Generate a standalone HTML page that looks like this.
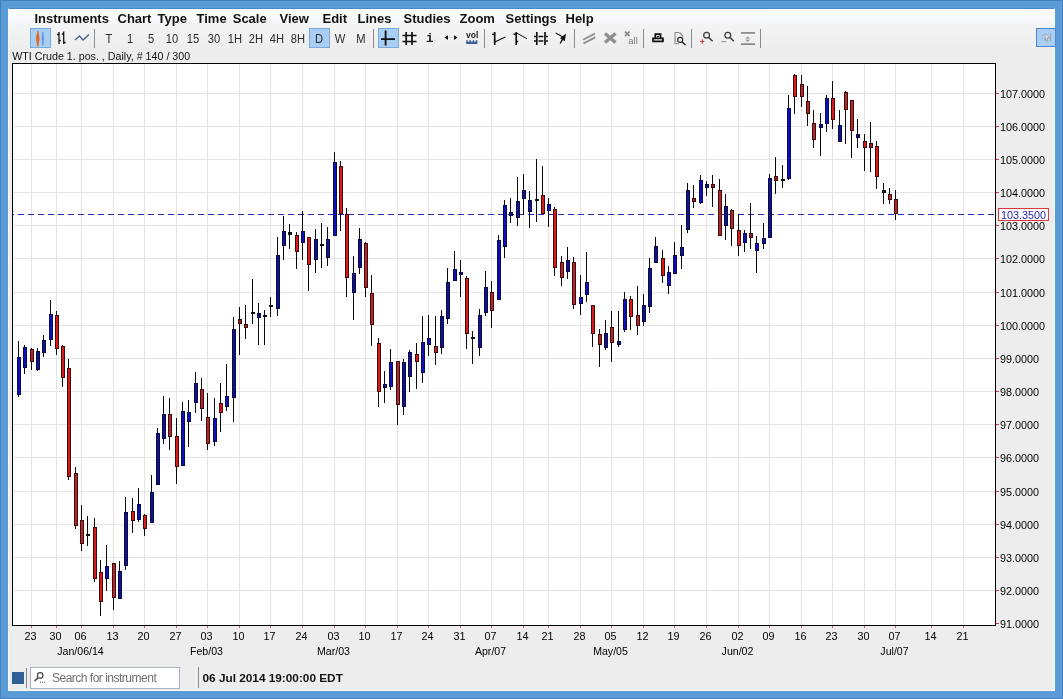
<!DOCTYPE html>
<html><head><meta charset="utf-8">
<style>
html,body{margin:0;padding:0}
body{will-change:transform;width:1063px;height:699px;overflow:hidden;position:relative;background:#5b9bd5;font-family:"Liberation Sans",sans-serif;}
#win{position:absolute;left:8px;top:8px;width:1047px;height:683px;background:#ededed;box-sizing:border-box;border:1px solid #f6fafd;border-top:1px solid #4c88c8}
#topgrad{position:absolute;left:0;top:0;width:1045px;height:18px;background:linear-gradient(#fefefe,#f2f3f5);}
#tbgrad{position:absolute;left:0;top:18px;width:1045px;height:24px;background:linear-gradient(#f3f3f3,#ededed);}
.menu{position:absolute;margin-left:0.5px;top:10.6px;font-size:13px;font-weight:bold;color:#111;line-height:15px;white-space:nowrap;word-spacing:2.5px}
.tb{position:absolute;top:30.5px;font-size:13px;color:#2c2c2c;line-height:15px;white-space:nowrap;text-align:center;width:30px;transform:scaleX(0.86);transform-origin:50% 50%}
.sep{position:absolute;top:29px;width:1px;height:19px;background:#8c8c8c}
.sel{position:absolute;top:28px;height:20px;background:#a8cef4;border:1px solid #78a8dc;box-sizing:border-box}
#title{position:absolute;left:12.2px;top:49.5px;font-size:10.7px;color:#111;line-height:13px;white-space:nowrap}
.yl{position:absolute;left:1000px;margin-top:1.6px;font-size:10.8px;line-height:13px;color:#000;white-space:nowrap}
.xl{position:absolute;top:630px;width:41px;text-align:center;font-size:10.8px;line-height:13px;color:#000}
.ml{position:absolute;top:645px;width:81px;text-align:center;font-size:10.6px;line-height:13px;color:#000}
#pricebox{position:absolute;left:998px;top:208px;width:51px;height:13px;box-sizing:border-box;border:1px solid #d63a3a;background:#fff;color:#2323b4;font-size:10.8px;line-height:12.6px;text-align:center}
</style></head><body>
<div style="position:absolute;left:0;top:0;width:1063px;height:699px;box-sizing:border-box;border:1px solid #4380c2"></div>
<div id="win"><div id="topgrad"></div><div id="tbgrad"></div></div>
<svg width="1063" height="699" viewBox="0 0 1063 699" shape-rendering="crispEdges" style="position:absolute;left:0;top:0">
<rect x="12" y="63" width="984" height="563" fill="#ffffff"/>
<rect x="13" y="590" width="982" height="1" fill="#e4e3e5"/>
<rect x="13" y="557" width="982" height="1" fill="#e4e3e5"/>
<rect x="13" y="524" width="982" height="1" fill="#e4e3e5"/>
<rect x="13" y="491" width="982" height="1" fill="#e4e3e5"/>
<rect x="13" y="457" width="982" height="1" fill="#e4e3e5"/>
<rect x="13" y="424" width="982" height="1" fill="#e4e3e5"/>
<rect x="13" y="391" width="982" height="1" fill="#e4e3e5"/>
<rect x="13" y="358" width="982" height="1" fill="#e4e3e5"/>
<rect x="13" y="325" width="982" height="1" fill="#e4e3e5"/>
<rect x="13" y="292" width="982" height="1" fill="#e4e3e5"/>
<rect x="13" y="258" width="982" height="1" fill="#e4e3e5"/>
<rect x="13" y="225" width="982" height="1" fill="#e4e3e5"/>
<rect x="13" y="192" width="982" height="1" fill="#e4e3e5"/>
<rect x="13" y="159" width="982" height="1" fill="#e4e3e5"/>
<rect x="13" y="126" width="982" height="1" fill="#e4e3e5"/>
<rect x="13" y="93" width="982" height="1" fill="#e4e3e5"/>
<rect x="31" y="64" width="1" height="561" fill="#e4e3e5"/>
<rect x="56" y="64" width="1" height="561" fill="#e4e3e5"/>
<rect x="81" y="64" width="1" height="561" fill="#e4e3e5"/>
<rect x="113" y="64" width="1" height="561" fill="#e4e3e5"/>
<rect x="144" y="64" width="1" height="561" fill="#e4e3e5"/>
<rect x="176" y="64" width="1" height="561" fill="#e4e3e5"/>
<rect x="207" y="64" width="1" height="561" fill="#e4e3e5"/>
<rect x="239" y="64" width="1" height="561" fill="#e4e3e5"/>
<rect x="270" y="64" width="1" height="561" fill="#e4e3e5"/>
<rect x="302" y="64" width="1" height="561" fill="#e4e3e5"/>
<rect x="334" y="64" width="1" height="561" fill="#e4e3e5"/>
<rect x="365" y="64" width="1" height="561" fill="#e4e3e5"/>
<rect x="397" y="64" width="1" height="561" fill="#e4e3e5"/>
<rect x="428" y="64" width="1" height="561" fill="#e4e3e5"/>
<rect x="460" y="64" width="1" height="561" fill="#e4e3e5"/>
<rect x="491" y="64" width="1" height="561" fill="#e4e3e5"/>
<rect x="523" y="64" width="1" height="561" fill="#e4e3e5"/>
<rect x="548" y="64" width="1" height="561" fill="#e4e3e5"/>
<rect x="580" y="64" width="1" height="561" fill="#e4e3e5"/>
<rect x="611" y="64" width="1" height="561" fill="#e4e3e5"/>
<rect x="643" y="64" width="1" height="561" fill="#e4e3e5"/>
<rect x="674" y="64" width="1" height="561" fill="#e4e3e5"/>
<rect x="706" y="64" width="1" height="561" fill="#e4e3e5"/>
<rect x="738" y="64" width="1" height="561" fill="#e4e3e5"/>
<rect x="769" y="64" width="1" height="561" fill="#e4e3e5"/>
<rect x="801" y="64" width="1" height="561" fill="#e4e3e5"/>
<rect x="832" y="64" width="1" height="561" fill="#e4e3e5"/>
<rect x="864" y="64" width="1" height="561" fill="#e4e3e5"/>
<rect x="895" y="64" width="1" height="561" fill="#e4e3e5"/>
<rect x="931" y="64" width="1" height="561" fill="#e4e3e5"/>
<rect x="963" y="64" width="1" height="561" fill="#e4e3e5"/>
<rect x="13" y="214" width="1" height="1" fill="#2a2ab8"/>
<rect x="18" y="214" width="6" height="1" fill="#2a2ab8"/>
<rect x="28" y="214" width="6" height="1" fill="#2a2ab8"/>
<rect x="38" y="214" width="6" height="1" fill="#2a2ab8"/>
<rect x="48" y="214" width="6" height="1" fill="#2a2ab8"/>
<rect x="58" y="214" width="6" height="1" fill="#2a2ab8"/>
<rect x="68" y="214" width="6" height="1" fill="#2a2ab8"/>
<rect x="78" y="214" width="6" height="1" fill="#2a2ab8"/>
<rect x="88" y="214" width="6" height="1" fill="#2a2ab8"/>
<rect x="98" y="214" width="6" height="1" fill="#2a2ab8"/>
<rect x="108" y="214" width="6" height="1" fill="#2a2ab8"/>
<rect x="118" y="214" width="6" height="1" fill="#2a2ab8"/>
<rect x="128" y="214" width="6" height="1" fill="#2a2ab8"/>
<rect x="138" y="214" width="6" height="1" fill="#2a2ab8"/>
<rect x="148" y="214" width="6" height="1" fill="#2a2ab8"/>
<rect x="158" y="214" width="6" height="1" fill="#2a2ab8"/>
<rect x="168" y="214" width="6" height="1" fill="#2a2ab8"/>
<rect x="178" y="214" width="6" height="1" fill="#2a2ab8"/>
<rect x="188" y="214" width="6" height="1" fill="#2a2ab8"/>
<rect x="198" y="214" width="6" height="1" fill="#2a2ab8"/>
<rect x="208" y="214" width="6" height="1" fill="#2a2ab8"/>
<rect x="218" y="214" width="6" height="1" fill="#2a2ab8"/>
<rect x="228" y="214" width="6" height="1" fill="#2a2ab8"/>
<rect x="238" y="214" width="6" height="1" fill="#2a2ab8"/>
<rect x="248" y="214" width="6" height="1" fill="#2a2ab8"/>
<rect x="258" y="214" width="6" height="1" fill="#2a2ab8"/>
<rect x="268" y="214" width="6" height="1" fill="#2a2ab8"/>
<rect x="278" y="214" width="6" height="1" fill="#2a2ab8"/>
<rect x="288" y="214" width="6" height="1" fill="#2a2ab8"/>
<rect x="298" y="214" width="6" height="1" fill="#2a2ab8"/>
<rect x="308" y="214" width="6" height="1" fill="#2a2ab8"/>
<rect x="318" y="214" width="6" height="1" fill="#2a2ab8"/>
<rect x="328" y="214" width="6" height="1" fill="#2a2ab8"/>
<rect x="338" y="214" width="6" height="1" fill="#2a2ab8"/>
<rect x="348" y="214" width="6" height="1" fill="#2a2ab8"/>
<rect x="358" y="214" width="6" height="1" fill="#2a2ab8"/>
<rect x="368" y="214" width="6" height="1" fill="#2a2ab8"/>
<rect x="378" y="214" width="6" height="1" fill="#2a2ab8"/>
<rect x="388" y="214" width="6" height="1" fill="#2a2ab8"/>
<rect x="398" y="214" width="6" height="1" fill="#2a2ab8"/>
<rect x="408" y="214" width="6" height="1" fill="#2a2ab8"/>
<rect x="418" y="214" width="6" height="1" fill="#2a2ab8"/>
<rect x="428" y="214" width="6" height="1" fill="#2a2ab8"/>
<rect x="438" y="214" width="6" height="1" fill="#2a2ab8"/>
<rect x="448" y="214" width="6" height="1" fill="#2a2ab8"/>
<rect x="458" y="214" width="6" height="1" fill="#2a2ab8"/>
<rect x="468" y="214" width="6" height="1" fill="#2a2ab8"/>
<rect x="478" y="214" width="6" height="1" fill="#2a2ab8"/>
<rect x="488" y="214" width="6" height="1" fill="#2a2ab8"/>
<rect x="498" y="214" width="6" height="1" fill="#2a2ab8"/>
<rect x="508" y="214" width="6" height="1" fill="#2a2ab8"/>
<rect x="518" y="214" width="6" height="1" fill="#2a2ab8"/>
<rect x="528" y="214" width="6" height="1" fill="#2a2ab8"/>
<rect x="538" y="214" width="6" height="1" fill="#2a2ab8"/>
<rect x="548" y="214" width="6" height="1" fill="#2a2ab8"/>
<rect x="558" y="214" width="6" height="1" fill="#2a2ab8"/>
<rect x="568" y="214" width="6" height="1" fill="#2a2ab8"/>
<rect x="578" y="214" width="6" height="1" fill="#2a2ab8"/>
<rect x="588" y="214" width="6" height="1" fill="#2a2ab8"/>
<rect x="598" y="214" width="6" height="1" fill="#2a2ab8"/>
<rect x="608" y="214" width="6" height="1" fill="#2a2ab8"/>
<rect x="618" y="214" width="6" height="1" fill="#2a2ab8"/>
<rect x="628" y="214" width="6" height="1" fill="#2a2ab8"/>
<rect x="638" y="214" width="6" height="1" fill="#2a2ab8"/>
<rect x="648" y="214" width="6" height="1" fill="#2a2ab8"/>
<rect x="658" y="214" width="6" height="1" fill="#2a2ab8"/>
<rect x="668" y="214" width="6" height="1" fill="#2a2ab8"/>
<rect x="678" y="214" width="6" height="1" fill="#2a2ab8"/>
<rect x="688" y="214" width="6" height="1" fill="#2a2ab8"/>
<rect x="698" y="214" width="6" height="1" fill="#2a2ab8"/>
<rect x="708" y="214" width="6" height="1" fill="#2a2ab8"/>
<rect x="718" y="214" width="6" height="1" fill="#2a2ab8"/>
<rect x="728" y="214" width="6" height="1" fill="#2a2ab8"/>
<rect x="738" y="214" width="6" height="1" fill="#2a2ab8"/>
<rect x="748" y="214" width="6" height="1" fill="#2a2ab8"/>
<rect x="758" y="214" width="6" height="1" fill="#2a2ab8"/>
<rect x="768" y="214" width="6" height="1" fill="#2a2ab8"/>
<rect x="778" y="214" width="6" height="1" fill="#2a2ab8"/>
<rect x="788" y="214" width="6" height="1" fill="#2a2ab8"/>
<rect x="798" y="214" width="6" height="1" fill="#2a2ab8"/>
<rect x="808" y="214" width="6" height="1" fill="#2a2ab8"/>
<rect x="818" y="214" width="6" height="1" fill="#2a2ab8"/>
<rect x="828" y="214" width="6" height="1" fill="#2a2ab8"/>
<rect x="838" y="214" width="6" height="1" fill="#2a2ab8"/>
<rect x="848" y="214" width="6" height="1" fill="#2a2ab8"/>
<rect x="858" y="214" width="6" height="1" fill="#2a2ab8"/>
<rect x="868" y="214" width="6" height="1" fill="#2a2ab8"/>
<rect x="878" y="214" width="6" height="1" fill="#2a2ab8"/>
<rect x="888" y="214" width="6" height="1" fill="#2a2ab8"/>
<rect x="898" y="214" width="6" height="1" fill="#2a2ab8"/>
<rect x="908" y="214" width="6" height="1" fill="#2a2ab8"/>
<rect x="918" y="214" width="6" height="1" fill="#2a2ab8"/>
<rect x="928" y="214" width="6" height="1" fill="#2a2ab8"/>
<rect x="938" y="214" width="6" height="1" fill="#2a2ab8"/>
<rect x="948" y="214" width="6" height="1" fill="#2a2ab8"/>
<rect x="958" y="214" width="6" height="1" fill="#2a2ab8"/>
<rect x="968" y="214" width="6" height="1" fill="#2a2ab8"/>
<rect x="978" y="214" width="6" height="1" fill="#2a2ab8"/>
<rect x="988" y="214" width="6" height="1" fill="#2a2ab8"/>
<rect x="18" y="341" width="1" height="56" fill="#0a0a0a"/>
<rect x="17" y="357" width="4" height="38" fill="#0a0a44"/>
<rect x="18" y="358" width="2" height="36" fill="#1010ba"/>
<rect x="24" y="345" width="1" height="29" fill="#0a0a0a"/>
<rect x="23" y="347" width="4" height="21" fill="#0a0a44"/>
<rect x="24" y="348" width="2" height="19" fill="#1010ba"/>
<rect x="31" y="348" width="1" height="22" fill="#0a0a0a"/>
<rect x="30" y="349" width="4" height="13" fill="#420a0a"/>
<rect x="31" y="350" width="2" height="11" fill="#aa2a2e"/>
<rect x="37" y="348" width="1" height="23" fill="#0a0a0a"/>
<rect x="36" y="351" width="4" height="19" fill="#0a0a44"/>
<rect x="37" y="352" width="2" height="17" fill="#12128e"/>
<rect x="43" y="335" width="1" height="22" fill="#0a0a0a"/>
<rect x="42" y="340" width="4" height="13" fill="#0a0a44"/>
<rect x="43" y="341" width="2" height="11" fill="#12128e"/>
<rect x="50" y="300" width="1" height="46" fill="#0a0a0a"/>
<rect x="49" y="314" width="4" height="26" fill="#0a0a44"/>
<rect x="50" y="315" width="2" height="24" fill="#1010ba"/>
<rect x="56" y="311" width="1" height="44" fill="#0a0a0a"/>
<rect x="55" y="315" width="4" height="34" fill="#420a0a"/>
<rect x="56" y="316" width="2" height="32" fill="#d41c1c"/>
<rect x="62" y="345" width="1" height="42" fill="#0a0a0a"/>
<rect x="61" y="346" width="4" height="32" fill="#420a0a"/>
<rect x="62" y="347" width="2" height="30" fill="#d41c1c"/>
<rect x="68" y="359" width="1" height="121" fill="#0a0a0a"/>
<rect x="67" y="368" width="4" height="109" fill="#420a0a"/>
<rect x="68" y="369" width="2" height="107" fill="#d41c1c"/>
<rect x="75" y="467" width="1" height="62" fill="#0a0a0a"/>
<rect x="74" y="473" width="4" height="53" fill="#420a0a"/>
<rect x="75" y="474" width="2" height="51" fill="#aa2a2e"/>
<rect x="81" y="505" width="1" height="46" fill="#0a0a0a"/>
<rect x="80" y="520" width="4" height="24" fill="#420a0a"/>
<rect x="81" y="521" width="2" height="22" fill="#aa2a2e"/>
<rect x="87" y="516" width="1" height="30" fill="#0a0a0a"/>
<rect x="86" y="534" width="4" height="2" fill="#101010"/>
<rect x="94" y="518" width="1" height="64" fill="#0a0a0a"/>
<rect x="93" y="527" width="4" height="52" fill="#420a0a"/>
<rect x="94" y="528" width="2" height="50" fill="#d41c1c"/>
<rect x="100" y="560" width="1" height="56" fill="#0a0a0a"/>
<rect x="99" y="572" width="4" height="30" fill="#420a0a"/>
<rect x="100" y="573" width="2" height="28" fill="#d41c1c"/>
<rect x="106" y="545" width="1" height="46" fill="#0a0a0a"/>
<rect x="105" y="566" width="4" height="13" fill="#0a0a44"/>
<rect x="106" y="567" width="2" height="11" fill="#1010ba"/>
<rect x="113" y="563" width="1" height="47" fill="#0a0a0a"/>
<rect x="112" y="563" width="4" height="35" fill="#420a0a"/>
<rect x="113" y="564" width="2" height="33" fill="#aa2a2e"/>
<rect x="119" y="561" width="1" height="38" fill="#0a0a0a"/>
<rect x="118" y="571" width="4" height="28" fill="#0a0a44"/>
<rect x="119" y="572" width="2" height="26" fill="#12128e"/>
<rect x="125" y="497" width="1" height="73" fill="#0a0a0a"/>
<rect x="124" y="512" width="4" height="54" fill="#0a0a44"/>
<rect x="125" y="513" width="2" height="52" fill="#12128e"/>
<rect x="132" y="498" width="1" height="35" fill="#0a0a0a"/>
<rect x="131" y="511" width="4" height="10" fill="#420a0a"/>
<rect x="132" y="512" width="2" height="8" fill="#d41c1c"/>
<rect x="138" y="488" width="1" height="34" fill="#0a0a0a"/>
<rect x="137" y="504" width="4" height="16" fill="#0a0a44"/>
<rect x="138" y="505" width="2" height="14" fill="#1010ba"/>
<rect x="144" y="514" width="1" height="22" fill="#0a0a0a"/>
<rect x="143" y="515" width="4" height="14" fill="#420a0a"/>
<rect x="144" y="516" width="2" height="12" fill="#d41c1c"/>
<rect x="151" y="475" width="1" height="48" fill="#0a0a0a"/>
<rect x="150" y="492" width="4" height="31" fill="#0a0a44"/>
<rect x="151" y="493" width="2" height="29" fill="#12128e"/>
<rect x="157" y="428" width="1" height="57" fill="#0a0a0a"/>
<rect x="156" y="433" width="4" height="52" fill="#0a0a44"/>
<rect x="157" y="434" width="2" height="50" fill="#12128e"/>
<rect x="163" y="396" width="1" height="48" fill="#0a0a0a"/>
<rect x="162" y="414" width="4" height="25" fill="#0a0a44"/>
<rect x="163" y="415" width="2" height="23" fill="#12128e"/>
<rect x="169" y="398" width="1" height="52" fill="#0a0a0a"/>
<rect x="168" y="414" width="4" height="23" fill="#420a0a"/>
<rect x="169" y="415" width="2" height="21" fill="#aa2a2e"/>
<rect x="176" y="418" width="1" height="66" fill="#0a0a0a"/>
<rect x="175" y="436" width="4" height="31" fill="#420a0a"/>
<rect x="176" y="437" width="2" height="29" fill="#d41c1c"/>
<rect x="182" y="402" width="1" height="64" fill="#0a0a0a"/>
<rect x="181" y="411" width="4" height="55" fill="#0a0a44"/>
<rect x="182" y="412" width="2" height="53" fill="#1010ba"/>
<rect x="188" y="400" width="1" height="47" fill="#0a0a0a"/>
<rect x="187" y="412" width="4" height="10" fill="#0a0a44"/>
<rect x="188" y="413" width="2" height="8" fill="#1010ba"/>
<rect x="195" y="372" width="1" height="41" fill="#0a0a0a"/>
<rect x="194" y="383" width="4" height="20" fill="#0a0a44"/>
<rect x="195" y="384" width="2" height="18" fill="#12128e"/>
<rect x="201" y="378" width="1" height="43" fill="#0a0a0a"/>
<rect x="200" y="389" width="4" height="20" fill="#420a0a"/>
<rect x="201" y="390" width="2" height="18" fill="#aa2a2e"/>
<rect x="207" y="393" width="1" height="57" fill="#0a0a0a"/>
<rect x="206" y="417" width="4" height="27" fill="#420a0a"/>
<rect x="207" y="418" width="2" height="25" fill="#aa2a2e"/>
<rect x="214" y="398" width="1" height="48" fill="#0a0a0a"/>
<rect x="213" y="418" width="4" height="24" fill="#0a0a44"/>
<rect x="214" y="419" width="2" height="22" fill="#1010ba"/>
<rect x="220" y="383" width="1" height="49" fill="#0a0a0a"/>
<rect x="219" y="403" width="4" height="10" fill="#420a0a"/>
<rect x="220" y="404" width="2" height="8" fill="#d41c1c"/>
<rect x="226" y="364" width="1" height="47" fill="#0a0a0a"/>
<rect x="225" y="396" width="4" height="11" fill="#0a0a44"/>
<rect x="226" y="397" width="2" height="9" fill="#1010ba"/>
<rect x="233" y="317" width="1" height="105" fill="#0a0a0a"/>
<rect x="232" y="329" width="4" height="69" fill="#0a0a44"/>
<rect x="233" y="330" width="2" height="67" fill="#12128e"/>
<rect x="239" y="307" width="1" height="48" fill="#0a0a0a"/>
<rect x="238" y="319" width="4" height="5" fill="#420a0a"/>
<rect x="239" y="320" width="2" height="3" fill="#8c2424"/>
<rect x="245" y="305" width="1" height="34" fill="#0a0a0a"/>
<rect x="244" y="324" width="4" height="4" fill="#420a0a"/>
<rect x="245" y="325" width="2" height="2" fill="#8c2424"/>
<rect x="252" y="279" width="1" height="45" fill="#0a0a0a"/>
<rect x="251" y="312" width="4" height="2" fill="#101010"/>
<rect x="258" y="303" width="1" height="42" fill="#0a0a0a"/>
<rect x="257" y="313" width="4" height="5" fill="#0a0a44"/>
<rect x="258" y="314" width="2" height="3" fill="#10107c"/>
<rect x="264" y="310" width="1" height="35" fill="#0a0a0a"/>
<rect x="263" y="315" width="4" height="2" fill="#101010"/>
<rect x="270" y="297" width="1" height="20" fill="#0a0a0a"/>
<rect x="269" y="305" width="4" height="2" fill="#101010"/>
<rect x="277" y="237" width="1" height="79" fill="#0a0a0a"/>
<rect x="276" y="255" width="4" height="54" fill="#0a0a44"/>
<rect x="277" y="256" width="2" height="52" fill="#12128e"/>
<rect x="283" y="216" width="1" height="44" fill="#0a0a0a"/>
<rect x="282" y="231" width="4" height="15" fill="#0a0a44"/>
<rect x="283" y="232" width="2" height="13" fill="#12128e"/>
<rect x="289" y="224" width="1" height="25" fill="#0a0a0a"/>
<rect x="288" y="232" width="4" height="3" fill="#101010"/>
<rect x="296" y="232" width="1" height="37" fill="#0a0a0a"/>
<rect x="295" y="235" width="4" height="17" fill="#420a0a"/>
<rect x="296" y="236" width="2" height="15" fill="#d41c1c"/>
<rect x="302" y="211" width="1" height="49" fill="#0a0a0a"/>
<rect x="301" y="231" width="4" height="12" fill="#0a0a44"/>
<rect x="302" y="232" width="2" height="10" fill="#1010ba"/>
<rect x="308" y="237" width="1" height="54" fill="#0a0a0a"/>
<rect x="307" y="237" width="4" height="28" fill="#420a0a"/>
<rect x="308" y="238" width="2" height="26" fill="#d41c1c"/>
<rect x="315" y="229" width="1" height="44" fill="#0a0a0a"/>
<rect x="314" y="239" width="4" height="21" fill="#0a0a44"/>
<rect x="315" y="240" width="2" height="19" fill="#12128e"/>
<rect x="321" y="223" width="1" height="45" fill="#0a0a0a"/>
<rect x="320" y="244" width="4" height="2" fill="#101010"/>
<rect x="327" y="227" width="1" height="39" fill="#0a0a0a"/>
<rect x="326" y="239" width="4" height="19" fill="#0a0a44"/>
<rect x="327" y="240" width="2" height="17" fill="#12128e"/>
<rect x="334" y="152" width="1" height="84" fill="#0a0a0a"/>
<rect x="333" y="162" width="4" height="74" fill="#0a0a44"/>
<rect x="334" y="163" width="2" height="72" fill="#1010ba"/>
<rect x="340" y="161" width="1" height="70" fill="#0a0a0a"/>
<rect x="339" y="166" width="4" height="48" fill="#420a0a"/>
<rect x="340" y="167" width="2" height="46" fill="#d41c1c"/>
<rect x="346" y="208" width="1" height="89" fill="#0a0a0a"/>
<rect x="345" y="214" width="4" height="64" fill="#420a0a"/>
<rect x="346" y="215" width="2" height="62" fill="#d41c1c"/>
<rect x="353" y="256" width="1" height="64" fill="#0a0a0a"/>
<rect x="352" y="273" width="4" height="20" fill="#0a0a44"/>
<rect x="353" y="274" width="2" height="18" fill="#12128e"/>
<rect x="359" y="228" width="1" height="46" fill="#0a0a0a"/>
<rect x="358" y="239" width="4" height="29" fill="#0a0a44"/>
<rect x="359" y="240" width="2" height="27" fill="#12128e"/>
<rect x="365" y="242" width="1" height="55" fill="#0a0a0a"/>
<rect x="364" y="243" width="4" height="45" fill="#420a0a"/>
<rect x="365" y="244" width="2" height="43" fill="#aa2a2e"/>
<rect x="371" y="275" width="1" height="71" fill="#0a0a0a"/>
<rect x="370" y="293" width="4" height="32" fill="#420a0a"/>
<rect x="371" y="294" width="2" height="30" fill="#aa2a2e"/>
<rect x="378" y="338" width="1" height="69" fill="#0a0a0a"/>
<rect x="377" y="343" width="4" height="49" fill="#420a0a"/>
<rect x="378" y="344" width="2" height="47" fill="#d41c1c"/>
<rect x="384" y="371" width="1" height="32" fill="#0a0a0a"/>
<rect x="383" y="384" width="4" height="4" fill="#0a0a44"/>
<rect x="384" y="385" width="2" height="2" fill="#10107c"/>
<rect x="390" y="349" width="1" height="41" fill="#0a0a0a"/>
<rect x="389" y="362" width="4" height="25" fill="#0a0a44"/>
<rect x="390" y="363" width="2" height="23" fill="#1010ba"/>
<rect x="397" y="361" width="1" height="64" fill="#0a0a0a"/>
<rect x="396" y="361" width="4" height="44" fill="#420a0a"/>
<rect x="397" y="362" width="2" height="42" fill="#aa2a2e"/>
<rect x="403" y="359" width="1" height="56" fill="#0a0a0a"/>
<rect x="402" y="362" width="4" height="45" fill="#0a0a44"/>
<rect x="403" y="363" width="2" height="43" fill="#12128e"/>
<rect x="409" y="350" width="1" height="42" fill="#0a0a0a"/>
<rect x="408" y="352" width="4" height="25" fill="#0a0a44"/>
<rect x="409" y="353" width="2" height="23" fill="#12128e"/>
<rect x="416" y="343" width="1" height="46" fill="#0a0a0a"/>
<rect x="415" y="354" width="4" height="8" fill="#420a0a"/>
<rect x="416" y="355" width="2" height="6" fill="#d41c1c"/>
<rect x="422" y="316" width="1" height="67" fill="#0a0a0a"/>
<rect x="421" y="342" width="4" height="31" fill="#0a0a44"/>
<rect x="422" y="343" width="2" height="29" fill="#1010ba"/>
<rect x="428" y="315" width="1" height="41" fill="#0a0a0a"/>
<rect x="427" y="338" width="4" height="7" fill="#0a0a44"/>
<rect x="428" y="339" width="2" height="5" fill="#1010ba"/>
<rect x="435" y="316" width="1" height="49" fill="#0a0a0a"/>
<rect x="434" y="346" width="4" height="7" fill="#420a0a"/>
<rect x="435" y="347" width="2" height="5" fill="#aa2a2e"/>
<rect x="441" y="310" width="1" height="44" fill="#0a0a0a"/>
<rect x="440" y="316" width="4" height="32" fill="#0a0a44"/>
<rect x="441" y="317" width="2" height="30" fill="#12128e"/>
<rect x="447" y="268" width="1" height="56" fill="#0a0a0a"/>
<rect x="446" y="282" width="4" height="37" fill="#0a0a44"/>
<rect x="447" y="283" width="2" height="35" fill="#12128e"/>
<rect x="454" y="251" width="1" height="30" fill="#0a0a0a"/>
<rect x="453" y="269" width="4" height="12" fill="#0a0a44"/>
<rect x="454" y="270" width="2" height="10" fill="#1010ba"/>
<rect x="460" y="260" width="1" height="37" fill="#0a0a0a"/>
<rect x="459" y="272" width="4" height="3" fill="#0a0a44"/>
<rect x="460" y="273" width="2" height="1" fill="#10107c"/>
<rect x="466" y="276" width="1" height="73" fill="#0a0a0a"/>
<rect x="465" y="278" width="4" height="56" fill="#420a0a"/>
<rect x="466" y="279" width="2" height="54" fill="#d41c1c"/>
<rect x="472" y="331" width="1" height="33" fill="#0a0a0a"/>
<rect x="471" y="337" width="4" height="2" fill="#101010"/>
<rect x="479" y="309" width="1" height="47" fill="#0a0a0a"/>
<rect x="478" y="315" width="4" height="33" fill="#0a0a44"/>
<rect x="479" y="316" width="2" height="31" fill="#12128e"/>
<rect x="485" y="271" width="1" height="45" fill="#0a0a0a"/>
<rect x="484" y="287" width="4" height="26" fill="#0a0a44"/>
<rect x="485" y="288" width="2" height="24" fill="#12128e"/>
<rect x="491" y="281" width="1" height="47" fill="#0a0a0a"/>
<rect x="490" y="292" width="4" height="19" fill="#420a0a"/>
<rect x="491" y="293" width="2" height="17" fill="#aa2a2e"/>
<rect x="498" y="235" width="1" height="65" fill="#0a0a0a"/>
<rect x="497" y="240" width="4" height="60" fill="#0a0a44"/>
<rect x="498" y="241" width="2" height="58" fill="#1010ba"/>
<rect x="504" y="200" width="1" height="58" fill="#0a0a0a"/>
<rect x="503" y="205" width="4" height="42" fill="#0a0a44"/>
<rect x="504" y="206" width="2" height="40" fill="#1010ba"/>
<rect x="510" y="198" width="1" height="25" fill="#0a0a0a"/>
<rect x="509" y="212" width="4" height="4" fill="#0a0a44"/>
<rect x="510" y="213" width="2" height="2" fill="#10107c"/>
<rect x="517" y="177" width="1" height="49" fill="#0a0a0a"/>
<rect x="516" y="201" width="4" height="17" fill="#0a0a44"/>
<rect x="517" y="202" width="2" height="15" fill="#12128e"/>
<rect x="523" y="174" width="1" height="41" fill="#0a0a0a"/>
<rect x="522" y="190" width="4" height="9" fill="#0a0a44"/>
<rect x="523" y="191" width="2" height="7" fill="#12128e"/>
<rect x="529" y="191" width="1" height="37" fill="#0a0a0a"/>
<rect x="528" y="200" width="4" height="12" fill="#0a0a44"/>
<rect x="529" y="201" width="2" height="10" fill="#12128e"/>
<rect x="536" y="159" width="1" height="63" fill="#0a0a0a"/>
<rect x="535" y="199" width="4" height="2" fill="#101010"/>
<rect x="542" y="166" width="1" height="48" fill="#0a0a0a"/>
<rect x="541" y="195" width="4" height="19" fill="#420a0a"/>
<rect x="542" y="196" width="2" height="17" fill="#d41c1c"/>
<rect x="548" y="198" width="1" height="29" fill="#0a0a0a"/>
<rect x="547" y="204" width="4" height="7" fill="#0a0a44"/>
<rect x="548" y="205" width="2" height="5" fill="#1010ba"/>
<rect x="554" y="207" width="1" height="69" fill="#0a0a0a"/>
<rect x="553" y="209" width="4" height="59" fill="#420a0a"/>
<rect x="554" y="210" width="2" height="57" fill="#d41c1c"/>
<rect x="561" y="256" width="1" height="30" fill="#0a0a0a"/>
<rect x="560" y="262" width="4" height="16" fill="#420a0a"/>
<rect x="561" y="263" width="2" height="14" fill="#aa2a2e"/>
<rect x="567" y="247" width="1" height="32" fill="#0a0a0a"/>
<rect x="566" y="260" width="4" height="12" fill="#0a0a44"/>
<rect x="567" y="261" width="2" height="10" fill="#12128e"/>
<rect x="573" y="257" width="1" height="52" fill="#0a0a0a"/>
<rect x="572" y="262" width="4" height="43" fill="#420a0a"/>
<rect x="573" y="263" width="2" height="41" fill="#aa2a2e"/>
<rect x="580" y="275" width="1" height="40" fill="#0a0a0a"/>
<rect x="579" y="297" width="4" height="7" fill="#0a0a44"/>
<rect x="580" y="298" width="2" height="5" fill="#1010ba"/>
<rect x="586" y="252" width="1" height="50" fill="#0a0a0a"/>
<rect x="585" y="282" width="4" height="13" fill="#0a0a44"/>
<rect x="586" y="283" width="2" height="11" fill="#1010ba"/>
<rect x="592" y="305" width="1" height="42" fill="#0a0a0a"/>
<rect x="591" y="305" width="4" height="29" fill="#420a0a"/>
<rect x="592" y="306" width="2" height="27" fill="#d41c1c"/>
<rect x="599" y="329" width="1" height="38" fill="#0a0a0a"/>
<rect x="598" y="334" width="4" height="11" fill="#420a0a"/>
<rect x="599" y="335" width="2" height="9" fill="#aa2a2e"/>
<rect x="605" y="320" width="1" height="30" fill="#0a0a0a"/>
<rect x="604" y="333" width="4" height="15" fill="#0a0a44"/>
<rect x="605" y="334" width="2" height="13" fill="#12128e"/>
<rect x="611" y="311" width="1" height="51" fill="#0a0a0a"/>
<rect x="610" y="327" width="4" height="16" fill="#420a0a"/>
<rect x="611" y="328" width="2" height="14" fill="#aa2a2e"/>
<rect x="618" y="311" width="1" height="36" fill="#0a0a0a"/>
<rect x="617" y="341" width="4" height="4" fill="#0a0a44"/>
<rect x="618" y="342" width="2" height="2" fill="#10107c"/>
<rect x="624" y="292" width="1" height="40" fill="#0a0a0a"/>
<rect x="623" y="299" width="4" height="31" fill="#0a0a44"/>
<rect x="624" y="300" width="2" height="29" fill="#1010ba"/>
<rect x="630" y="296" width="1" height="34" fill="#0a0a0a"/>
<rect x="629" y="299" width="4" height="18" fill="#420a0a"/>
<rect x="630" y="300" width="2" height="16" fill="#d41c1c"/>
<rect x="637" y="286" width="1" height="49" fill="#0a0a0a"/>
<rect x="636" y="315" width="4" height="11" fill="#420a0a"/>
<rect x="637" y="316" width="2" height="9" fill="#aa2a2e"/>
<rect x="643" y="294" width="1" height="32" fill="#0a0a0a"/>
<rect x="642" y="305" width="4" height="17" fill="#0a0a44"/>
<rect x="643" y="306" width="2" height="15" fill="#12128e"/>
<rect x="649" y="258" width="1" height="55" fill="#0a0a0a"/>
<rect x="648" y="268" width="4" height="39" fill="#0a0a44"/>
<rect x="649" y="269" width="2" height="37" fill="#12128e"/>
<rect x="655" y="237" width="1" height="26" fill="#0a0a0a"/>
<rect x="654" y="246" width="4" height="17" fill="#0a0a44"/>
<rect x="655" y="247" width="2" height="15" fill="#12128e"/>
<rect x="662" y="250" width="1" height="33" fill="#0a0a0a"/>
<rect x="661" y="258" width="4" height="18" fill="#420a0a"/>
<rect x="662" y="259" width="2" height="16" fill="#d41c1c"/>
<rect x="668" y="266" width="1" height="28" fill="#0a0a0a"/>
<rect x="667" y="272" width="4" height="14" fill="#0a0a44"/>
<rect x="668" y="273" width="2" height="12" fill="#1010ba"/>
<rect x="674" y="242" width="1" height="32" fill="#0a0a0a"/>
<rect x="673" y="255" width="4" height="19" fill="#0a0a44"/>
<rect x="674" y="256" width="2" height="17" fill="#1010ba"/>
<rect x="681" y="225" width="1" height="44" fill="#0a0a0a"/>
<rect x="680" y="247" width="4" height="9" fill="#0a0a44"/>
<rect x="681" y="248" width="2" height="7" fill="#12128e"/>
<rect x="687" y="183" width="1" height="50" fill="#0a0a0a"/>
<rect x="686" y="190" width="4" height="40" fill="#0a0a44"/>
<rect x="687" y="191" width="2" height="38" fill="#12128e"/>
<rect x="693" y="185" width="1" height="23" fill="#0a0a0a"/>
<rect x="692" y="198" width="4" height="4" fill="#420a0a"/>
<rect x="693" y="199" width="2" height="2" fill="#8c2424"/>
<rect x="700" y="175" width="1" height="29" fill="#0a0a0a"/>
<rect x="699" y="180" width="4" height="23" fill="#0a0a44"/>
<rect x="700" y="181" width="2" height="21" fill="#1010ba"/>
<rect x="706" y="181" width="1" height="15" fill="#0a0a0a"/>
<rect x="705" y="184" width="4" height="4" fill="#0a0a44"/>
<rect x="706" y="185" width="2" height="2" fill="#10107c"/>
<rect x="712" y="175" width="1" height="32" fill="#0a0a0a"/>
<rect x="711" y="184" width="4" height="4" fill="#420a0a"/>
<rect x="712" y="185" width="2" height="2" fill="#8c2424"/>
<rect x="719" y="179" width="1" height="57" fill="#0a0a0a"/>
<rect x="718" y="190" width="4" height="46" fill="#420a0a"/>
<rect x="719" y="191" width="2" height="44" fill="#aa2a2e"/>
<rect x="725" y="194" width="1" height="46" fill="#0a0a0a"/>
<rect x="724" y="206" width="4" height="20" fill="#0a0a44"/>
<rect x="725" y="207" width="2" height="18" fill="#12128e"/>
<rect x="731" y="209" width="1" height="37" fill="#0a0a0a"/>
<rect x="730" y="210" width="4" height="19" fill="#420a0a"/>
<rect x="731" y="211" width="2" height="17" fill="#aa2a2e"/>
<rect x="738" y="214" width="1" height="42" fill="#0a0a0a"/>
<rect x="737" y="230" width="4" height="16" fill="#420a0a"/>
<rect x="738" y="231" width="2" height="14" fill="#d41c1c"/>
<rect x="744" y="230" width="1" height="22" fill="#0a0a0a"/>
<rect x="743" y="233" width="4" height="10" fill="#0a0a44"/>
<rect x="744" y="234" width="2" height="8" fill="#1010ba"/>
<rect x="750" y="203" width="1" height="46" fill="#0a0a0a"/>
<rect x="749" y="233" width="4" height="5" fill="#420a0a"/>
<rect x="750" y="234" width="2" height="3" fill="#8c2424"/>
<rect x="756" y="236" width="1" height="37" fill="#0a0a0a"/>
<rect x="755" y="243" width="4" height="8" fill="#0a0a44"/>
<rect x="756" y="244" width="2" height="6" fill="#1010ba"/>
<rect x="763" y="223" width="1" height="26" fill="#0a0a0a"/>
<rect x="762" y="238" width="4" height="6" fill="#0a0a44"/>
<rect x="763" y="239" width="2" height="4" fill="#12128e"/>
<rect x="769" y="174" width="1" height="64" fill="#0a0a0a"/>
<rect x="768" y="178" width="4" height="60" fill="#0a0a44"/>
<rect x="769" y="179" width="2" height="58" fill="#12128e"/>
<rect x="775" y="157" width="1" height="37" fill="#0a0a0a"/>
<rect x="774" y="176" width="4" height="5" fill="#420a0a"/>
<rect x="775" y="177" width="2" height="3" fill="#8c2424"/>
<rect x="782" y="165" width="1" height="23" fill="#0a0a0a"/>
<rect x="781" y="179" width="4" height="2" fill="#101010"/>
<rect x="788" y="95" width="1" height="85" fill="#0a0a0a"/>
<rect x="787" y="108" width="4" height="71" fill="#0a0a44"/>
<rect x="788" y="109" width="2" height="69" fill="#1010ba"/>
<rect x="794" y="74" width="1" height="40" fill="#0a0a0a"/>
<rect x="793" y="75" width="4" height="22" fill="#420a0a"/>
<rect x="794" y="76" width="2" height="20" fill="#d41c1c"/>
<rect x="801" y="75" width="1" height="32" fill="#0a0a0a"/>
<rect x="800" y="84" width="4" height="13" fill="#420a0a"/>
<rect x="801" y="85" width="2" height="11" fill="#aa2a2e"/>
<rect x="807" y="86" width="1" height="40" fill="#0a0a0a"/>
<rect x="806" y="101" width="4" height="13" fill="#420a0a"/>
<rect x="807" y="102" width="2" height="11" fill="#aa2a2e"/>
<rect x="813" y="110" width="1" height="38" fill="#0a0a0a"/>
<rect x="812" y="123" width="4" height="17" fill="#420a0a"/>
<rect x="813" y="124" width="2" height="15" fill="#aa2a2e"/>
<rect x="820" y="113" width="1" height="43" fill="#0a0a0a"/>
<rect x="819" y="124" width="4" height="4" fill="#0a0a44"/>
<rect x="820" y="125" width="2" height="2" fill="#10107c"/>
<rect x="826" y="95" width="1" height="37" fill="#0a0a0a"/>
<rect x="825" y="98" width="4" height="26" fill="#0a0a44"/>
<rect x="826" y="99" width="2" height="24" fill="#1010ba"/>
<rect x="832" y="81" width="1" height="48" fill="#0a0a0a"/>
<rect x="831" y="98" width="4" height="22" fill="#420a0a"/>
<rect x="832" y="99" width="2" height="20" fill="#d41c1c"/>
<rect x="839" y="110" width="1" height="32" fill="#0a0a0a"/>
<rect x="838" y="125" width="4" height="17" fill="#0a0a44"/>
<rect x="839" y="126" width="2" height="15" fill="#12128e"/>
<rect x="845" y="91" width="1" height="53" fill="#0a0a0a"/>
<rect x="844" y="92" width="4" height="18" fill="#420a0a"/>
<rect x="845" y="93" width="2" height="16" fill="#aa2a2e"/>
<rect x="851" y="100" width="1" height="58" fill="#0a0a0a"/>
<rect x="850" y="100" width="4" height="31" fill="#420a0a"/>
<rect x="851" y="101" width="2" height="29" fill="#aa2a2e"/>
<rect x="857" y="119" width="1" height="29" fill="#0a0a0a"/>
<rect x="856" y="134" width="4" height="4" fill="#0a0a44"/>
<rect x="857" y="135" width="2" height="2" fill="#10107c"/>
<rect x="864" y="134" width="1" height="37" fill="#0a0a0a"/>
<rect x="863" y="141" width="4" height="7" fill="#420a0a"/>
<rect x="864" y="142" width="2" height="5" fill="#d41c1c"/>
<rect x="870" y="122" width="1" height="50" fill="#0a0a0a"/>
<rect x="869" y="143" width="4" height="5" fill="#420a0a"/>
<rect x="870" y="144" width="2" height="3" fill="#8c2424"/>
<rect x="876" y="141" width="1" height="48" fill="#0a0a0a"/>
<rect x="875" y="146" width="4" height="31" fill="#420a0a"/>
<rect x="876" y="147" width="2" height="29" fill="#d41c1c"/>
<rect x="883" y="183" width="1" height="21" fill="#0a0a0a"/>
<rect x="882" y="190" width="4" height="3" fill="#101010"/>
<rect x="889" y="188" width="1" height="16" fill="#0a0a0a"/>
<rect x="888" y="194" width="4" height="6" fill="#420a0a"/>
<rect x="889" y="195" width="2" height="4" fill="#aa2a2e"/>
<rect x="895" y="190" width="1" height="30" fill="#0a0a0a"/>
<rect x="894" y="199" width="4" height="15" fill="#420a0a"/>
<rect x="895" y="200" width="2" height="13" fill="#aa2a2e"/>
<rect x="12" y="63" width="984" height="1" fill="#000"/>
<rect x="12" y="625" width="984" height="1" fill="#000"/>
<rect x="12" y="63" width="1" height="563" fill="#000"/>
<rect x="995" y="63" width="1" height="563" fill="#000"/>
<rect x="996" y="623" width="3" height="1" fill="#d04040"/>
<rect x="996" y="590" width="3" height="1" fill="#d04040"/>
<rect x="996" y="557" width="3" height="1" fill="#d04040"/>
<rect x="996" y="524" width="3" height="1" fill="#d04040"/>
<rect x="996" y="491" width="3" height="1" fill="#d04040"/>
<rect x="996" y="457" width="3" height="1" fill="#d04040"/>
<rect x="996" y="424" width="3" height="1" fill="#d04040"/>
<rect x="996" y="391" width="3" height="1" fill="#d04040"/>
<rect x="996" y="358" width="3" height="1" fill="#d04040"/>
<rect x="996" y="325" width="3" height="1" fill="#d04040"/>
<rect x="996" y="292" width="3" height="1" fill="#d04040"/>
<rect x="996" y="258" width="3" height="1" fill="#d04040"/>
<rect x="996" y="225" width="3" height="1" fill="#d04040"/>
<rect x="996" y="192" width="3" height="1" fill="#d04040"/>
<rect x="996" y="159" width="3" height="1" fill="#d04040"/>
<rect x="996" y="126" width="3" height="1" fill="#d04040"/>
<rect x="996" y="93" width="3" height="1" fill="#d04040"/>
<rect x="31" y="626" width="1" height="2" fill="#d06060"/>
<rect x="56" y="626" width="1" height="2" fill="#d06060"/>
<rect x="81" y="626" width="1" height="2" fill="#d06060"/>
<rect x="113" y="626" width="1" height="2" fill="#d06060"/>
<rect x="144" y="626" width="1" height="2" fill="#d06060"/>
<rect x="176" y="626" width="1" height="2" fill="#d06060"/>
<rect x="207" y="626" width="1" height="2" fill="#d06060"/>
<rect x="239" y="626" width="1" height="2" fill="#d06060"/>
<rect x="270" y="626" width="1" height="2" fill="#d06060"/>
<rect x="302" y="626" width="1" height="2" fill="#d06060"/>
<rect x="334" y="626" width="1" height="2" fill="#d06060"/>
<rect x="365" y="626" width="1" height="2" fill="#d06060"/>
<rect x="397" y="626" width="1" height="2" fill="#d06060"/>
<rect x="428" y="626" width="1" height="2" fill="#d06060"/>
<rect x="460" y="626" width="1" height="2" fill="#d06060"/>
<rect x="491" y="626" width="1" height="2" fill="#d06060"/>
<rect x="523" y="626" width="1" height="2" fill="#d06060"/>
<rect x="548" y="626" width="1" height="2" fill="#d06060"/>
<rect x="580" y="626" width="1" height="2" fill="#d06060"/>
<rect x="611" y="626" width="1" height="2" fill="#d06060"/>
<rect x="643" y="626" width="1" height="2" fill="#d06060"/>
<rect x="674" y="626" width="1" height="2" fill="#d06060"/>
<rect x="706" y="626" width="1" height="2" fill="#d06060"/>
<rect x="738" y="626" width="1" height="2" fill="#d06060"/>
<rect x="769" y="626" width="1" height="2" fill="#d06060"/>
<rect x="801" y="626" width="1" height="2" fill="#d06060"/>
<rect x="832" y="626" width="1" height="2" fill="#d06060"/>
<rect x="864" y="626" width="1" height="2" fill="#d06060"/>
<rect x="895" y="626" width="1" height="2" fill="#d06060"/>
<rect x="931" y="626" width="1" height="2" fill="#d06060"/>
<rect x="963" y="626" width="1" height="2" fill="#d06060"/>
</svg>
<div class="yl" style="top:616px">91.0000</div>
<div class="yl" style="top:583px">92.0000</div>
<div class="yl" style="top:550px">93.0000</div>
<div class="yl" style="top:517px">94.0000</div>
<div class="yl" style="top:484px">95.0000</div>
<div class="yl" style="top:450px">96.0000</div>
<div class="yl" style="top:417px">97.0000</div>
<div class="yl" style="top:384px">98.0000</div>
<div class="yl" style="top:351px">99.0000</div>
<div class="yl" style="top:318px">100.0000</div>
<div class="yl" style="top:285px">101.0000</div>
<div class="yl" style="top:251px">102.0000</div>
<div class="yl" style="top:218px">103.0000</div>
<div class="yl" style="top:185px">104.0000</div>
<div class="yl" style="top:152px">105.0000</div>
<div class="yl" style="top:119px">106.0000</div>
<div class="yl" style="top:86px">107.0000</div>
<div class="xl" style="left:10px">23</div>
<div class="xl" style="left:35px">30</div>
<div class="xl" style="left:60px">06</div>
<div class="xl" style="left:92px">13</div>
<div class="xl" style="left:123px">20</div>
<div class="xl" style="left:155px">27</div>
<div class="xl" style="left:186px">03</div>
<div class="xl" style="left:218px">10</div>
<div class="xl" style="left:249px">17</div>
<div class="xl" style="left:281px">24</div>
<div class="xl" style="left:313px">03</div>
<div class="xl" style="left:344px">10</div>
<div class="xl" style="left:376px">17</div>
<div class="xl" style="left:407px">24</div>
<div class="xl" style="left:439px">31</div>
<div class="xl" style="left:470px">07</div>
<div class="xl" style="left:502px">14</div>
<div class="xl" style="left:527px">21</div>
<div class="xl" style="left:559px">28</div>
<div class="xl" style="left:590px">05</div>
<div class="xl" style="left:622px">12</div>
<div class="xl" style="left:653px">19</div>
<div class="xl" style="left:685px">26</div>
<div class="xl" style="left:717px">02</div>
<div class="xl" style="left:748px">09</div>
<div class="xl" style="left:780px">16</div>
<div class="xl" style="left:811px">23</div>
<div class="xl" style="left:843px">30</div>
<div class="xl" style="left:874px">07</div>
<div class="xl" style="left:910px">14</div>
<div class="xl" style="left:942px">21</div>
<div class="ml" style="left:40px">Jan/06/14</div>
<div class="ml" style="left:166px">Feb/03</div>
<div class="ml" style="left:293px">Mar/03</div>
<div class="ml" style="left:450px">Apr/07</div>
<div class="ml" style="left:570px">May/05</div>
<div class="ml" style="left:697px">Jun/02</div>
<div class="ml" style="left:854px">Jul/07</div>
<div id="pricebox">103.3500</div>
<div id="title">WTI Crude 1. pos. , Daily, # 140 / 300</div>
<div class="menu" style="left:34px">Instruments</div>
<div class="menu" style="left:117px">Chart Type</div>
<div class="menu" style="left:196px">Time Scale</div>
<div class="menu" style="left:279px">View</div>
<div class="menu" style="left:322px">Edit</div>
<div class="menu" style="left:357px">Lines</div>
<div class="menu" style="left:403px">Studies</div>
<div class="menu" style="left:459px">Zoom</div>
<div class="menu" style="left:505px">Settings</div>
<div class="menu" style="left:565px">Help</div>
<div class="sel" style="left:30px;width:21px"></div>
<div class="sel" style="left:309px;width:21px"></div>
<div class="sel" style="left:378px;width:21px"></div>
<div class="sel" style="left:1036px;width:20px;height:19px;border-color:#4f86cf"></div>
<div class="sep" style="left:94px"></div>
<div class="sep" style="left:373px"></div>
<div class="sep" style="left:484px"></div>
<div class="sep" style="left:574px"></div>
<div class="sep" style="left:643px"></div>
<div class="sep" style="left:691px"></div>
<div class="sep" style="left:760px"></div>
<div class="tb" style="left:93.6px">T</div>
<div class="tb" style="left:114.6px">1</div>
<div class="tb" style="left:135.6px">5</div>
<div class="tb" style="left:156.6px">10</div>
<div class="tb" style="left:177.6px">15</div>
<div class="tb" style="left:198.6px">30</div>
<div class="tb" style="left:219.6px">1H</div>
<div class="tb" style="left:240.6px">2H</div>
<div class="tb" style="left:261.6px">4H</div>
<div class="tb" style="left:282.6px">8H</div>
<div class="tb" style="left:304.40000000000003px">D</div>
<div class="tb" style="left:325.40000000000003px">W</div>
<div class="tb" style="left:346.40000000000003px">M</div>
<svg width="1063" height="60" viewBox="0 0 1063 60" style="position:absolute;left:0;top:0">
<path d="M37.8 31 Q40.4 38.5 37.8 46.5 Q35.2 38.5 37.8 31 Z" fill="#e8641e" stroke="#e8641e" stroke-width="0.8"/>
<path d="M42.9 31.8 Q44.9 38.5 42.9 45.2 Q40.9 38.5 42.9 31.8 Z" fill="#6a98de" stroke="#6a98de" stroke-width="0.8"/>
<g stroke="#111" stroke-width="1.3" fill="none"><path d="M59 32v12M57 34.5h2M59 40.5h1.8"/><path d="M63.7 31.5v12.5M61.8 34h1.9M63.7 42.5h2"/></g>
<path d="M75 40 L79.5 36 L83 40 L89 34.5" stroke="#44608f" stroke-width="1.3" fill="none"/>
<path d="M381 39.2h14M385.6 30.5v15" stroke="#111" stroke-width="1.8" fill="none"/>
<path d="M402.5 35.5h14M402.5 41.5h14M406.2 32v13M412 32v13" stroke="#111" stroke-width="1.7" fill="none"/>
<text x="429.8" y="42.3" font-family="Liberation Mono" font-weight="bold" font-size="12.5" text-anchor="middle" fill="#222">i</text>
<path d="M444.5 37.6 L448 35.2 L448 40 Z" fill="#111"/><path d="M457.5 37.6 L454 35.2 L454 40 Z" fill="#111"/>
<path d="M449.5 37.6h3.5" stroke="#bbb" stroke-width="1" stroke-dasharray="1 1"/>
<text x="472.2" y="37.6" font-family="Liberation Sans" font-weight="bold" font-size="8.5" text-anchor="middle" fill="#222">vol</text>
<path d="M466.2 44 V40.2 h1.6 v1.6 h1.6 v-1.6 h1.6 v1.6 h1.6 v-1.6 h1.6 v1.6 h1.6 v-1.6 h1.6 V44 Z" fill="#3b5c9c"/>
<g stroke="#111" fill="none"><path d="M494.7 32v13" stroke-width="1.7"/><path d="M492 34.3h2.7" stroke-width="1.5"/><path d="M494.7 42 L505.4 37" stroke-width="1.2"/></g>
<g stroke="#111" fill="none"><path d="M516.2 32v13" stroke-width="1.7"/><path d="M513.5 34.3h2.7M516.2 41.5h2" stroke-width="1.5"/><path d="M516.7 33 L527 38.8" stroke-width="1"/></g>
<g stroke="#111" fill="none" stroke-width="1.7"><path d="M536.8 32v13M545 32v13"/><path d="M534 36.6h2.3M538.5 36.6h4.8M546 36.6h2M534 41h2.3M538.5 41h4.8M546 41h2" stroke-width="1.5"/></g>
<path d="M555.7 33 L563 37" stroke="#111" stroke-width="1.1"/><path d="M565.2 35 L560.2 43.5 L562.2 39.5 Z M565.2 35 L561 38.2 L564.3 40.3 Z" fill="#111" stroke="#111" stroke-width="1.2"/>
<path d="M583 39.8 L594.8 33.6 M583.5 43.4 L595.3 37.4" stroke="#8f8f8f" stroke-width="1.8" fill="none"/>
<path d="M605 33.5 L615.5 42.5 M615.5 33.5 L605 42.5" stroke="#8e8e8e" stroke-width="3.4" fill="none"/>
<path d="M625 31.6 L629.6 36.2 M629.6 31.6 L625 36.2" stroke="#8a8a8a" stroke-width="1.7"/>
<text x="633" y="43.8" font-family="Liberation Sans" font-size="9.5" text-anchor="middle" fill="#777">all</text>
<g fill="none" stroke="#111" stroke-width="1.7"><path d="M655.3 38.3 V34.2 H660.6 V38.3"/><path d="M653 38.3 H663 V41.3 H653 Z" /><path d="M656.8 36.5h2.4" stroke-width="1.2"/></g>
<g fill="none" stroke="#8a8a8a" stroke-width="1.1"><path d="M679.5 32.5 H675 V43.8 H679"/><path d="M679.5 32.5 L682.8 35.8 V37"/></g>
<circle cx="680.2" cy="39.8" r="2.5" fill="#f4f4f4" stroke="#333" stroke-width="1.3"/><path d="M682 41.8 L685.5 45" stroke="#333" stroke-width="1.6"/>
<circle cx="706.6" cy="35.2" r="2.9" fill="none" stroke="#3a3a3a" stroke-width="1.25"/><path d="M708.8 37.4 L712.6 41.3" stroke="#3a3a3a" stroke-width="1.5"/>
<path d="M700 41.5h4.4M702.2 39.3v4.4" stroke="#e03030" stroke-width="1.1"/>
<circle cx="727.8" cy="35.2" r="2.9" fill="none" stroke="#3a3a3a" stroke-width="1.25"/><path d="M730 37.4 L733.8 41.3" stroke="#3a3a3a" stroke-width="1.5"/>
<path d="M721.6 41.6h4.6" stroke="#999" stroke-width="1.2"/>
<path d="M741 32.9h14M741 44.1h14" stroke="#8a8a8a" stroke-width="1.9"/>
<path d="M747.8 36.5 L745.8 38 H749.8 Z M747.8 42 L745.8 40 H749.8 Z" fill="#9a9a9a"/><path d="M745.5 38.9h4.6" stroke="#9a9a9a" stroke-width="0.9"/>
<path d="M1045.2 33.2 L1049.6 37.6 L1046.8 38 L1048 41 L1046.8 41.4 L1045.6 38.6 L1045.2 40.6 Z" fill="#e8e4e0" stroke="#8a8a96" stroke-width="0.6"/>
<path d="M1050.5 33.5v8" stroke="#9aa0b0" stroke-width="1"/><path d="M1041.5 36.5 l2-2 M1041.5 37.5 l2 2" stroke="#9aa8c0" stroke-width="0.8"/>
</svg>
<div style="position:absolute;left:12px;top:672px;width:12px;height:12px;background:#2f5f95;"></div>
<div style="position:absolute;left:26px;top:668px;width:1px;height:20px;background:#8a8a8a"></div>
<div style="position:absolute;left:30px;top:667px;width:150px;height:22px;box-sizing:border-box;border:1px solid #a9afc6;background:#fff"></div>
<svg width="20" height="20" viewBox="0 0 20 20" style="position:absolute;left:32px;top:668px"><circle cx="8.2" cy="7.4" r="2.8" fill="none" stroke="#444" stroke-width="1.2"/><path d="M6.2 9.6 L2.6 13" stroke="#444" stroke-width="1.5"/><path d="M8 14.2h1M10 14.2h1M12 14.2h1" stroke="#444" stroke-width="1"/></svg>
<div style="position:absolute;left:52px;top:670.5px;font-size:12px;line-height:14px;color:#707070;white-space:nowrap;letter-spacing:-0.5px">Search for instrument</div>
<div style="position:absolute;left:198px;top:667px;width:1px;height:21px;background:#8a8a8a"></div>
<div style="position:absolute;left:202.5px;top:671px;font-size:11.8px;line-height:14px;font-weight:bold;color:#111;white-space:nowrap">06 Jul 2014 19:00:00 EDT</div>
</body></html>
